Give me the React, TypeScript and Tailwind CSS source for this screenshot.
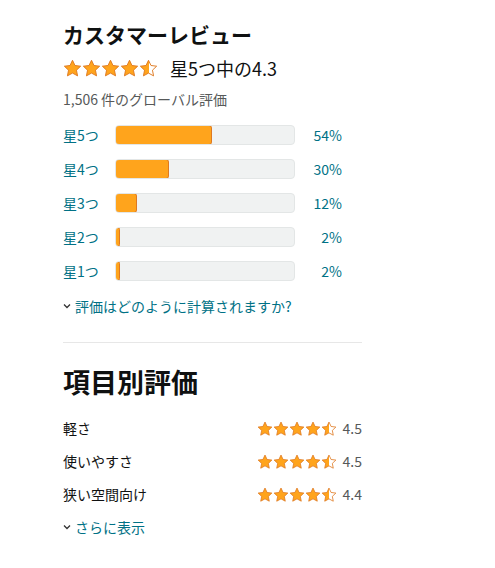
const bars = [
  { label: "星5つ", pct: 54 },
  { label: "星4つ", pct: 30 },
  { label: "星3つ", pct: 12 },
  { label: "星2つ", pct: 2 },
  { label: "星1つ", pct: 2 },
];

const features = [
  { label: "軽さ", score: "4.5" },
  { label: "使いやすさ", score: "4.5" },
  { label: "狭い空間向け", score: "4.4" },
];

const STAR = "M12 1.6l3.1 6.6 7.2.9-5.3 5 1.4 7.2L12 17.8l-6.4 3.5 1.4-7.2-5.3-5 7.2-.9z";

function Star({ half = false, size = 19 }: { half?: boolean; size?: number }) {
  const id = `half-${size}`;
  return (
    <svg width={size} height={size} viewBox="0 0 24 24" className="shrink-0">
      {half && (
        <defs>
          <linearGradient id={id} x1="0" x2="1" y1="0" y2="0">
            <stop offset="50%" stopColor="#ffa41c" />
            <stop offset="50%" stopColor="#ffffff" />
          </linearGradient>
        </defs>
      )}
      <path
        d={STAR}
        fill={half ? `url(#${id})` : "#ffa41c"}
        stroke="#de7921"
        strokeWidth="1.2"
        strokeLinejoin="round"
      />
    </svg>
  );
}

function Stars({ size }: { size: number }) {
  return (
    <div className="flex items-center">
      <Star size={size} />
      <Star size={size} />
      <Star size={size} />
      <Star size={size} />
      <Star size={size} half />
    </div>
  );
}

function Chevron() {
  return (
    <svg width="8" height="6" viewBox="0 0 8 6" className="mr-[4px] shrink-0">
      <path d="M1 1.5l3 3 3-3" fill="none" stroke="#333" strokeWidth="1.3" />
    </svg>
  );
}

export default function App() {
  return (
    <div
      className="bg-white min-h-[568px] pl-[63px] pt-[20px] text-[#0f1111]"
      style={{ fontFamily: '"Noto Sans CJK JP", "Noto Sans", sans-serif' }}
    >
      <h2 className="text-[21px] leading-[28px] font-bold">カスタマーレビュー</h2>
      <div className="mt-[8px] flex items-center h-[24px]">
        <Stars size={19} />
        <span className="ml-[12px] text-[18px] leading-[24px]">星5つ中の4.3</span>
      </div>
      <div className="mt-[10px] text-[14px] leading-[18px] text-[#565959]">1,506 件のグローバル評価</div>

      <div className="mt-[10px]">
        {bars.map((b) => (
          <div key={b.label} className="flex items-center h-[34px] w-[279px] text-[14px] text-[#007185]">
            <span className="w-[52px]">{b.label}</span>
            <div className="w-[180px] h-[20px] rounded-[4px] bg-[#f0f2f2] border border-[#e3e6e6] overflow-hidden">
              <div
                className="h-full bg-[#ffa41c] border border-[#de7921] rounded-[3px] -m-px box-content"
                style={{ width: `calc(${b.pct}% - 1px)` }}
              />
            </div>
            <span className="flex-1 text-right">{b.pct}%</span>
          </div>
        ))}
      </div>

      <div className="mt-[8px] flex items-center h-[20px] text-[14px] text-[#007185]">
        <Chevron />
        評価はどのように計算されますか?
      </div>

      <div className="mt-[26px] w-[299px] border-t border-[#e7e7e7]" />

      <h2 className="mt-[21px] text-[27px] leading-[36px] font-bold">項目別評価</h2>

      <div className="mt-[12px]">
        {features.map((f) => (
          <div key={f.label} className="flex items-center justify-between h-[33px] w-[299px] text-[14px]">
            <span>{f.label}</span>
            <div className="flex items-center">
              <Stars size={16} />
              <span className="ml-[6px] text-[#565959]">{f.score}</span>
            </div>
          </div>
        ))}
      </div>

      <div className="mt-[6px] flex items-center h-[20px] text-[14px] text-[#007185]">
        <Chevron />
        さらに表示
      </div>
    </div>
  );
}
